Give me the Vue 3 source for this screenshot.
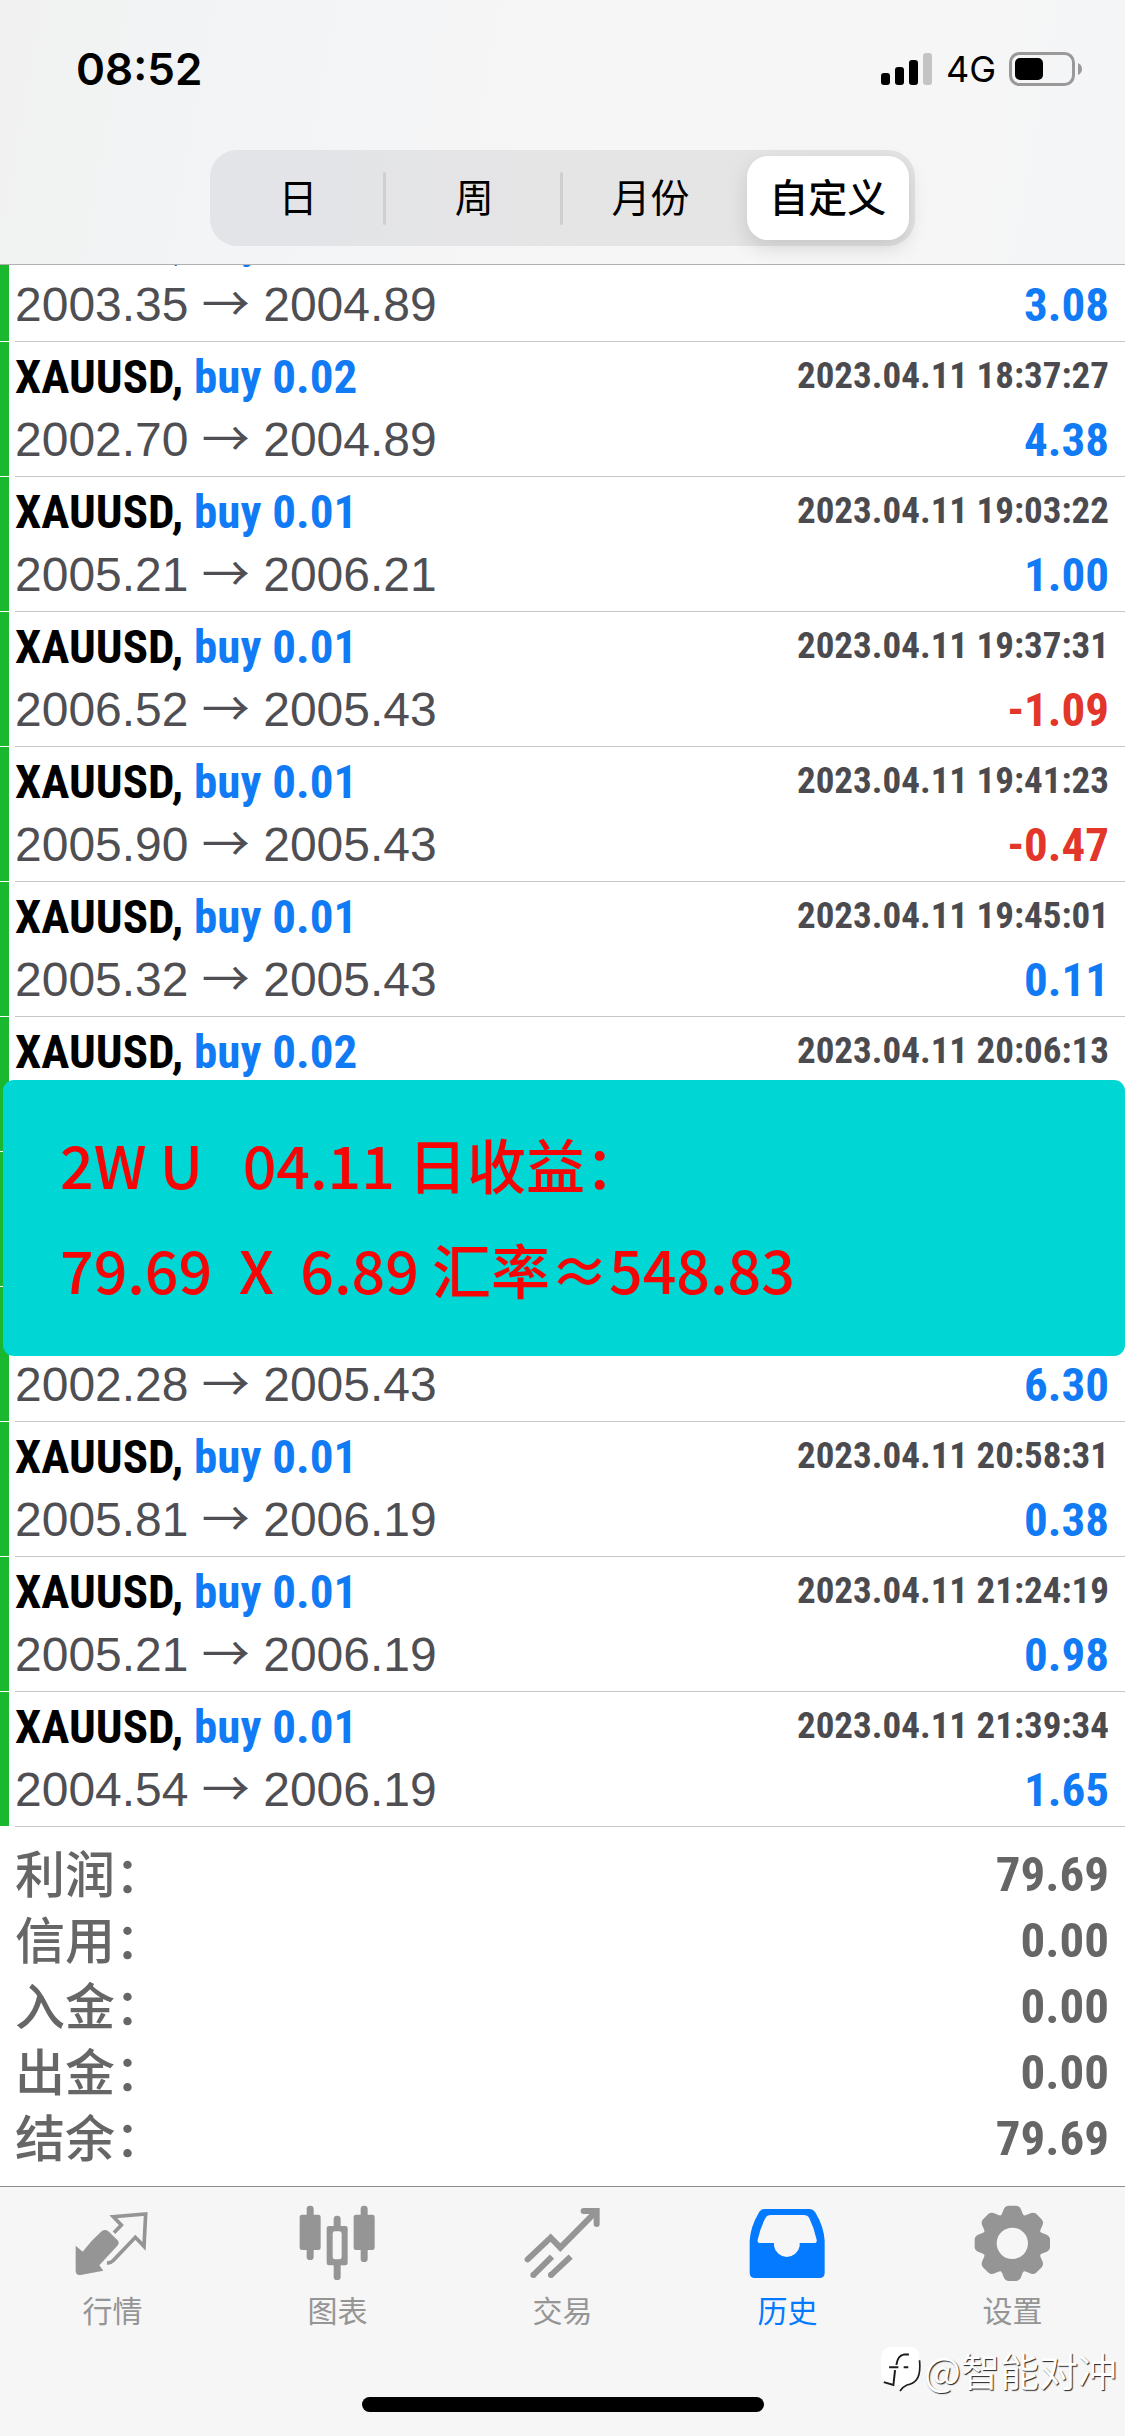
<script setup>
import { ref } from 'vue'

const periods = ['日', '周', '月份', '自定义']
const period = ref('自定义')

const deals = [
  { side: 'buy 0.02', from: '2003.35', to: '2004.89', profit: '3.08' },
  { side: 'buy 0.02', time: '2023.04.11 18:37:27', from: '2002.70', to: '2004.89', profit: '4.38' },
  { side: 'buy 0.01', time: '2023.04.11 19:03:22', from: '2005.21', to: '2006.21', profit: '1.00' },
  { side: 'buy 0.01', time: '2023.04.11 19:37:31', from: '2006.52', to: '2005.43', profit: '-1.09' },
  { side: 'buy 0.01', time: '2023.04.11 19:41:23', from: '2005.90', to: '2005.43', profit: '-0.47' },
  { side: 'buy 0.01', time: '2023.04.11 19:45:01', from: '2005.32', to: '2005.43', profit: '0.11' },
  { side: 'buy 0.02', time: '2023.04.11 20:06:13' },
  {},
  { from: '2002.28', to: '2005.43', profit: '6.30' },
  { side: 'buy 0.01', time: '2023.04.11 20:58:31', from: '2005.81', to: '2006.19', profit: '0.38' },
  { side: 'buy 0.01', time: '2023.04.11 21:24:19', from: '2005.21', to: '2006.19', profit: '0.98' },
  { side: 'buy 0.01', time: '2023.04.11 21:39:34', from: '2004.54', to: '2006.19', profit: '1.65' }
]

const noteLines = ['2W U   04.11 日收益：', '79.69  X  6.89 汇率≈548.83']

const totals = [
  ['利润：', '79.69'],
  ['信用：', '0.00'],
  ['入金：', '0.00'],
  ['出金：', '0.00'],
  ['结余：', '79.69']
]

const teeth = [0, 45, 90, 135, 180, 225, 270, 315]
</script>

<template>
  <div class="screen">
    <header class="top">
      <div class="status">
        <span class="clock">08:52</span>
        <div class="indicators">
          <svg class="signal" viewBox="0 0 51 32" aria-hidden="true">
            <rect x="0" y="20" width="9" height="12" rx="3" />
            <rect x="14" y="14" width="9" height="18" rx="3" />
            <rect x="28" y="7" width="9" height="25" rx="3" />
            <rect x="42" y="0" width="9" height="32" rx="3" fill="#c4c4c4" />
          </svg>
          <span class="network">4G</span>
          <svg class="battery" viewBox="0 0 74 34" aria-hidden="true">
            <rect x="1.5" y="1.5" width="63" height="31" rx="9" fill="none" stroke="#999" stroke-width="3" />
            <rect x="6" y="6" width="28" height="22" rx="5" />
            <path d="M69 11 Q73 13 73 17 Q73 21 69 23Z" fill="#999" />
          </svg>
        </div>
      </div>
      <nav class="segments">
        <button
          v-for="p in periods"
          :key="p"
          type="button"
          class="segment"
          :class="{ active: p === period }"
          @click="period = p"
        >{{ p }}</button>
      </nav>
    </header>

    <main class="history">
      <ul class="deals">
        <li v-for="(d, i) in deals" :key="i" class="deal">
          <span class="bar"></span>
          <div class="body">
            <div class="line title">
              <span v-if="d.side" class="symbol">XAUUSD, <span class="side">{{ d.side }}</span></span>
              <time v-if="d.time" class="time">{{ d.time }}</time>
            </div>
            <div class="line detail">
              <span v-if="d.from" class="prices">{{ d.from }} <span class="arrow">→</span> {{ d.to }}</span>
              <span v-if="d.profit" class="profit" :class="{ loss: d.profit.startsWith('-') }">{{ d.profit }}</span>
            </div>
          </div>
        </li>
      </ul>
      <aside class="note">
        <p v-for="line in noteLines" :key="line">{{ line }}</p>
      </aside>
    </main>

    <dl class="totals">
      <div v-for="[label, value] in totals" :key="label" class="total">
        <dt>{{ label }}</dt>
        <dd>{{ value }}</dd>
      </div>
    </dl>

    <footer class="bottom">
      <nav class="tabs">
        <button type="button" class="tab">
          <svg viewBox="217 99 240 240" aria-hidden="true">
            <path fill="currentColor" d="M225 227 L246 245 Q272 211 303 184 Q313 176 323 184 L350 210 Q358 218 350 227 L296 286 L308 302 L240 315 Q226 317 225 304Z" />
            <path fill="none" stroke="currentColor" stroke-width="11" d="M340 188 L362 165 L338 140 L435 132 L430 229 L404 202 L337 272 Q330 280 319 278" />
          </svg>
          <span>行情</span>
        </button>
        <button type="button" class="tab">
          <svg viewBox="892 99 240 240" aria-hidden="true">
            <g fill="currentColor">
              <rect x="918" y="107" width="21" height="163" rx="10" />
              <rect x="897" y="134" width="63" height="106" rx="7" />
              <rect x="1080" y="107" width="21" height="169" rx="10" />
              <rect x="1059" y="134" width="63" height="106" rx="7" />
              <rect x="999" y="137" width="21" height="193" rx="10" />
              <rect x="978" y="168" width="63" height="118" rx="7" />
            </g>
            <rect x="996" y="184" width="27" height="84" rx="7" fill="#f6f6f6" />
          </svg>
          <span>图表</span>
        </button>
        <button type="button" class="tab">
          <svg viewBox="367 99 240 240" aria-hidden="true">
            <g fill="none" stroke="currentColor" stroke-width="18">
              <path stroke-linecap="round" d="M381 268 L450 203 L479 233 L586 125" />
              <path stroke-linecap="round" d="M549 123 H588 V162" />
              <path d="M397 316 L454 260 M450 316 L510 260" />
            </g>
            <circle cx="398" cy="315" r="9" fill="currentColor" />
            <circle cx="451" cy="315" r="9" fill="currentColor" />
          </svg>
          <span>交易</span>
        </button>
        <button type="button" class="tab current">
          <svg viewBox="1042 99 240 240" aria-hidden="true">
            <path fill="currentColor" fill-rule="evenodd" d="M1092 117 H1226 Q1238 117 1245 129 Q1269 169 1272 212 V308 Q1272 324 1256 324 H1063 Q1047 324 1047 308 V212 Q1050 169 1074 129 Q1080 117 1092 117Z M1111 135 Q1099 135 1094 145 Q1080 171 1071 209 Q1069 219 1079 219 H1120 V228 A39 39 0 0 0 1197 228 V219 H1240 Q1250 219 1248 209 Q1240 173 1226 145 Q1221 135 1209 135Z" />
          </svg>
          <span>历史</span>
        </button>
        <button type="button" class="tab">
          <svg viewBox="427 99 240 240" aria-hidden="true">
            <g transform="translate(545 220)" fill="currentColor">
              <circle r="67" fill="none" stroke="currentColor" stroke-width="40" />
              <path v-for="a in teeth" :key="a" :transform="`rotate(${a})`" d="M-37 -80 Q-31 -86 -27 -99 Q-23 -112 -12 -113 H12 Q23 -112 27 -99 Q31 -86 37 -80Z" />
            </g>
          </svg>
          <span>设置</span>
        </button>
      </nav>
      <div class="home"></div>
      <div class="watermark">
        <svg viewBox="38 42 120 136" aria-hidden="true">
          <path fill="#fff" d="M66 42 H128 Q154 44 154 72 V112 Q154 148 124 155 Q106 160 95 172 L97 156 L76 160 L48 148 Q38 138 38 116 V72 Q40 44 66 42Z" />
          <path fill="none" stroke="#1c1c1c" stroke-width="6" d="M122 65 H106 Q88 68 84 96 M62 103 H90 M106 103 H120 M80 112 L75 157 L46 148" />
          <path fill="none" stroke="#1c1c1c" stroke-width="5" d="M154 82 Q158 126 144 142 Q134 154 116 157 Q104 162 95 175" />
        </svg>
        <span>@智能对冲</span>
      </div>
    </footer>
  </div>
</template>

<style>
body {
  margin: 0;
  background: #fff;
}
</style>

<style scoped>
.screen {
  --narrow: "Roboto Condensed", "Open Sans Condensed", "Noto Sans Condensed", "Arial Narrow", "Liberation Sans", sans-serif;
  display: flex;
  flex-direction: column;
  min-height: 100vh;
  overflow: hidden;
  background: #fff;
  color: #000;
  font-family: "Liberation Sans", "Noto Sans CJK SC", sans-serif;
}

button {
  padding: 0;
  border: 0;
  background: none;
  color: inherit;
  font: inherit;
}

.top {
  position: relative;
  z-index: 1;
  padding-bottom: 18px;
  border-bottom: 1px solid #b0b0b2;
  background: linear-gradient(100deg, #f0f1f0 0%, #f3f4f6 22%, #f6f6f6 50%, #f6f6f6 80%, #f4f5f7 100%);
}

.status {
  display: flex;
  align-items: center;
  justify-content: space-between;
  height: 90px;
  padding: 24px 42px 36px 76px;
}

.clock {
  font: 600 44px/60px Inter, sans-serif;
}

.indicators {
  display: flex;
  align-items: center;
}

.signal {
  width: 51px;
  height: 32px;
}

.network {
  margin: 0 13px 0 14px;
  font: 400 36px/40px Inter, sans-serif;
}

.battery {
  width: 74px;
  height: 34px;
}

.segments {
  display: grid;
  grid-template-columns: repeat(4, 1fr);
  box-sizing: border-box;
  width: 705px;
  max-width: 100%;
  height: 96px;
  margin: 0 auto;
  border-radius: 27px;
  background: linear-gradient(90deg, #e3e4e8, #e5e5e6 50%, #e4e4e4);
}

.segment {
  position: relative;
  padding-bottom: 6px;
  font: 400 39px/88px "Noto Sans CJK SC", sans-serif;
}

.segment:nth-child(-n + 2)::after {
  content: "";
  position: absolute;
  top: 22px;
  right: 0;
  width: 3px;
  height: 53px;
  border-radius: 2px;
  background: #cfcfd2;
}

.segment.active {
  margin: 6px 6px 6px 8px;
  border-radius: 21px;
  background: #fff;
  box-shadow: 0 8px 20px rgba(0, 0, 0, 0.13);
  font-weight: 500;
  line-height: 78px;
}

.history {
  position: relative;
  margin-top: -58px;
}

.deals {
  margin: 0;
  padding: 0;
  list-style: none;
}

.deal {
  display: flex;
  gap: 6px;
  height: 135px;
}

.bar {
  width: 9px;
  margin-bottom: 1px;
  background: #19b82f;
}

.body {
  flex: 1;
  padding: 5px 16px 3px 0;
  border-bottom: 1px solid #c6c6c8;
}

.line {
  display: flex;
  justify-content: space-between;
  white-space: nowrap;
}

.title {
  height: 60px;
  font: 700 47px/60px var(--narrow);
}

.side,
.profit {
  color: #117af5;
}

.time {
  color: #4b4b4f;
  font-size: 37px;
  line-height: 58px;
}

.detail {
  height: 66px;
  font-size: 48px;
  line-height: 66px;
}

.prices {
  color: #4f4f53;
}

.arrow {
  font-family: "Noto Sans CJK SC", sans-serif;
  line-height: 48px;
}

.profit {
  font-family: var(--narrow);
  font-size: 47px;
  font-weight: 700;
}

.profit.loss {
  color: #e3362b;
}

.note {
  position: absolute;
  top: 873px;
  left: 3px;
  right: 0;
  box-sizing: border-box;
  height: 276px;
  padding: 31px 57px;
  border-radius: 11px;
  background: #00d7d5;
  color: #f60505;
  font: 500 59px/105px "Noto Sans CJK SC", sans-serif;
  white-space: pre;
}

.note p {
  margin: 0;
}

.totals {
  margin: 0;
  padding: 14px 16px 15px 15px;
  color: #666;
  font-size: 50px;
  font-weight: 700;
}

.total {
  display: flex;
  justify-content: space-between;
  height: 66px;
}

.total dt {
  font-family: "Noto Sans CJK SC", sans-serif;
  font-weight: 500;
  line-height: 61px;
}

.total dd {
  margin: 0;
  font-family: var(--narrow);
  font-size: 49px;
  line-height: 68px;
}

.bottom {
  position: relative;
  flex: 1;
  padding-bottom: 24px;
  border-top: 1px solid #8e8e90;
  background: #f6f6f6;
}

.tabs {
  display: grid;
  grid-template-columns: repeat(5, 1fr);
  padding-top: 16px;
}

.tab {
  display: flex;
  flex-direction: column;
  align-items: center;
  gap: 6px;
  color: #959595;
  font: 400 30px/40px "Noto Sans CJK SC", sans-serif;
}

.tab.current {
  color: #037aff;
}

.tab svg {
  width: 80px;
  height: 80px;
}

.home {
  width: 402px;
  height: 15px;
  margin: 68px auto 0;
  border-radius: 8px;
  background: #000;
}

.watermark {
  position: absolute;
  right: 8px;
  bottom: 39px;
  display: flex;
  align-items: center;
  gap: 3px;
  color: #fff;
  font: 400 39px/56px "Noto Sans CJK SC", sans-serif;
  text-shadow: 1px 1px 1px #222;
}

.watermark svg {
  width: 40px;
  height: 45px;
}
</style>
